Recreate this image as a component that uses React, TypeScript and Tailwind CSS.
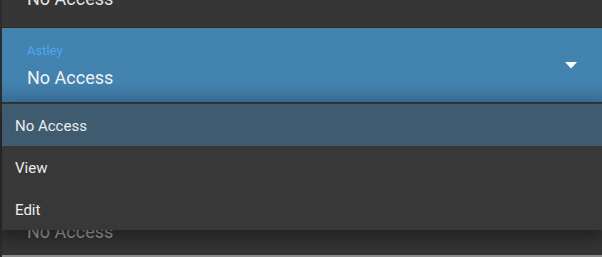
import { useState } from "react"

const options = ["No Access", "View", "Edit"]

function Field({ label, value, className = "" }: { label?: string; value: string; className?: string }) {
  return (
    <div className={`relative border-b border-[#2b2b2b] bg-[#363636] pl-[25px] ${className}`}>
      {label && <div className="text-[13px] leading-none text-[#4ba6ef]">{label}</div>}
      <div className="text-[18px] leading-none text-[#e4e4e4]">{value}</div>
    </div>
  )
}

export default function App() {
  const [selected] = useState("No Access")

  return (
    <div
      className="relative h-[257px] w-[602px] overflow-hidden bg-[#2c2c2c]"
      style={{ fontFamily: "Roboto, 'Noto Sans', sans-serif" }}
    >
      <div className="ml-[2px] flex flex-col">
        {/* field above, scrolled out of view */}
        <Field value="No Access" className="h-[29px] -mt-[1px] pt-0 [&>div]:-mt-[9px]" />

        {/* active select */}
        <div className="relative h-[74px] border-t border-[#5a7e98] bg-gradient-to-b from-[#4383b0] via-[#4282af] via-75% to-[#3a6d94] pl-[25px]">
          <div className="pt-[15px] text-[13px] leading-none text-[#4ba6ef]">Astley</div>
          <div className="pt-[12px] text-[18px] leading-none text-[#f2f2f2]">{selected}</div>
          <svg className="absolute right-[25px] top-[33px]" width="12" height="7" viewBox="0 0 12 7">
            <path d="M0 0 L12 0 L6 6.5 Z" fill="#ffffff" />
          </svg>
        </div>
        <div className="h-[1px] bg-[#26323b]" />

        {/* hidden field under the menu */}
        <div className="h-[80px] bg-[#363636]" />

        {/* field below */}
        <div className="h-[72px] bg-[#333333] pl-[25px] pt-[40px]">
          <div className="text-[18px] leading-none text-[#9a9a9a]">No Access</div>
        </div>
        <div className="h-[2px] bg-[#8a8a8a]" />
      </div>

      {/* open menu */}
      <ul className="absolute left-[2px] right-0 top-[104px] bg-[#383838] shadow-[0_8px_14px_rgba(0,0,0,0.35)]">
        {options.map((o) => (
          <li
            key={o}
            className={`flex h-[42px] items-center pl-[13px] pt-[3px] text-[15px] text-[#ececec] ${
              o === selected ? "bg-[#3e5b70]" : ""
            }`}
          >
            {o}
          </li>
        ))}
      </ul>
    </div>
  )
}
